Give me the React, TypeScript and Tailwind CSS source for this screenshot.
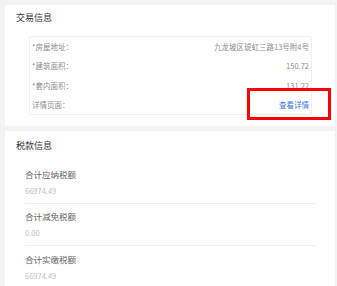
import React from 'react';

const tradeRows = [
  { label: '*房屋地址：', value: '九龙坡区琥虹三路13号附4号' },
  { label: '*建筑面积：', value: '150.72' },
  { label: '*套内面积：', value: '131.22' },
];

const taxItems = [
  { label: '合计应纳税额', value: '66974.49' },
  { label: '合计减免税额', value: '0.00' },
  { label: '合计实缴税额', value: '66974.49' },
];

export default function App() {
  return (
    <div
      className="relative h-[286px] w-[337px] overflow-hidden bg-[#f3f3f3] pl-[5px] pr-[2px] pt-[5px] font-['Noto_Sans_CJK_SC',sans-serif]"
    >
      <section className="flex h-[121px] flex-col bg-white">
        <h2 className="mt-[8px] h-[10px] pl-[11px] text-[9px] leading-[10px] text-[#333]">交易信息</h2>
        <div className="ml-[24px] mr-[23px] mt-[13px] flex h-[79px] flex-col rounded-[2px] border border-[#efefef] px-[2px]">
          {tradeRows.map((r) => (
            <div key={r.label} className="flex flex-1 items-center justify-between text-[7.5px] text-[#8c8c8c]">
              <span>{r.label}</span>
              <span>{r.value}</span>
            </div>
          ))}
          <div className="flex flex-1 items-center justify-between text-[7.5px] text-[#8c8c8c]">
            <span>详情页面：</span>
            <a className="text-[#3a78d8]">查看详情</a>
          </div>
        </div>
      </section>

      <section className="mt-[5px] flex flex-col bg-white pb-4">
        <h2 className="mt-[10px] h-[10px] pl-[11px] text-[9px] leading-[10px] text-[#333]">税款信息</h2>
        <div className="ml-[20px] mr-[19px] mt-[11px] flex flex-col">
          {taxItems.map((t, i) => (
            <div
              key={t.label}
              className={'flex h-[42px] flex-col justify-center gap-[7px] ' + (i < taxItems.length - 1 ? 'border-b border-[#eee]' : '')}
            >
              <span className="text-[8.5px] leading-[10px] text-[#666]">{t.label}</span>
              <span className="text-[7.5px] leading-[10px] text-[#c0c0c0]">{t.value}</span>
            </div>
          ))}
        </div>
      </section>

      <div className="absolute left-[247px] top-[88px] h-[32px] w-[84px] border-[3px] border-[#ff0000]" />
    </div>
  );
}
